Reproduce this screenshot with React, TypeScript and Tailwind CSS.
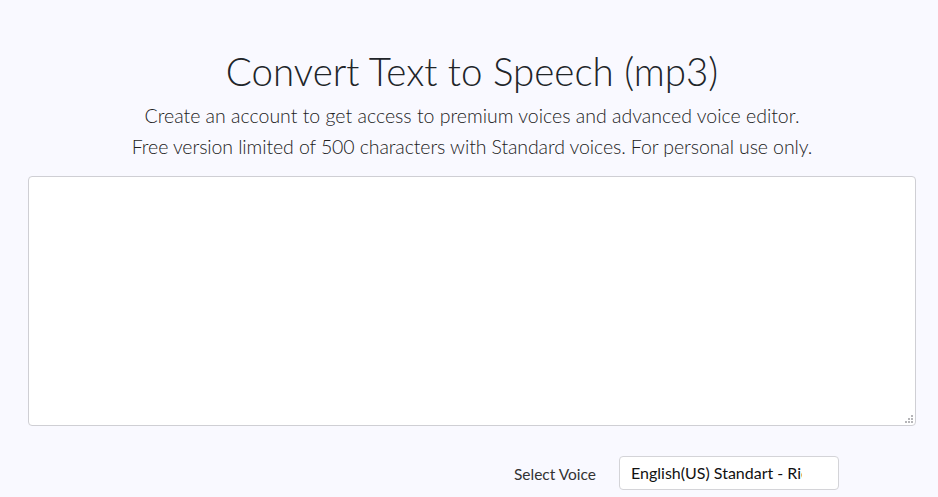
export default function App() {
  return (
    <div className="min-h-[497px] bg-[#f9f9ff] pl-[28px] pr-[22px] pt-[43px] font-['Lato','Noto_Sans',sans-serif] text-[#212529]">
      <h1 className="text-center text-[38.5px] font-light leading-[56px]">Convert Text to Speech (mp3)</h1>
      <div className="mt-[1px] text-center text-[19.5px] font-light leading-[31px] text-[#222]">
        <p>Create an account to get access to premium voices and advanced voice editor.</p>
        <p className="tracking-[-0.1px]">Free version limited of 500 characters with Standard voices. For personal use only.</p>
      </div>
      <div className="relative mt-[14px]">
        <textarea className="block h-[250px] w-full resize-none rounded-[4px] border border-[#cfcfd4] bg-white p-3 outline-none" />
        <svg className="pointer-events-none absolute bottom-[3px] right-[3px]" width="9" height="9" viewBox="0 0 9 9" aria-hidden="true">
          <g fill="#b5b5b8">
            <rect x="7" y="1" width="2" height="2" />
            <rect x="4" y="4" width="2" height="2" />
            <rect x="7" y="4" width="2" height="2" />
            <rect x="1" y="7" width="2" height="2" />
            <rect x="4" y="7" width="2" height="2" />
            <rect x="7" y="7" width="2" height="2" />
          </g>
        </svg>
      </div>
      <div className="mt-[30px] flex items-center justify-end pr-[77px]">
        <span className="mr-[23px] mt-[3px] text-[15.5px] text-[#333]">Select Voice</span>
        <div className="flex h-[34px] w-[220px] items-center overflow-hidden rounded-[4px] border border-[#d4d4d8] bg-white pl-[11px]">
          <span className="w-[171px] overflow-hidden whitespace-nowrap text-[16px] text-[#111]">English(US) Standart - Richard</span>
        </div>
      </div>
    </div>
  );
}
